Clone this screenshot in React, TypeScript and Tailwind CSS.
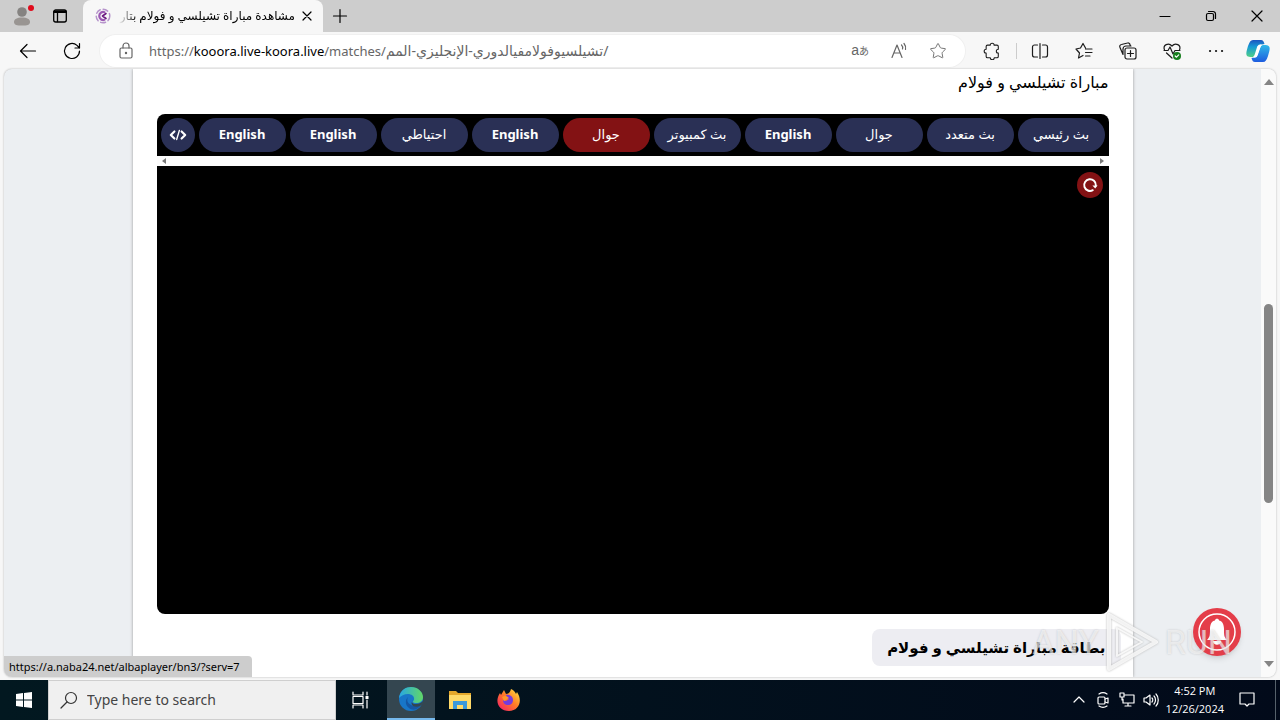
import React from "react";
import { Star } from "lucide-react";

const servers = ["بث رئيسي", "بث متعدد", "جوال", "English", "بث كمبيوتر", "جوال", "English", "احتياطي", "English", "English"];

const S = ({ children, className = "size-5", vb = "0 0 20 20" }: { children: React.ReactNode; className?: string; vb?: string }) => (
  <svg viewBox={vb} className={className} fill="none" stroke="currentColor" strokeWidth="1.2" strokeLinecap="round" strokeLinejoin="round" aria-hidden="true">{children}</svg>
);

function TabStrip() {
  return (
    <header className="flex h-8 shrink-0 items-stretch bg-[#cdcdcd]">
      <div className="flex w-[83px] items-center gap-5 rounded-br-md pl-3">
        <button aria-label="Profile" className="relative">
          <S className="size-5"><circle cx="10" cy="6" r="4.8" fill="#858381" stroke="none" /><path d="M2 16c0-3 3-4.500 8-4.500s8 1.500 8 4.500-3 3.500-8 3.500-8-.5-8-3.500z" fill="#999592" stroke="none" /></S>
          <span className="absolute -top-px left-4 size-[6px] rounded-full bg-[#e00b1c]" />
        </button>
        <button aria-label="Tab actions"><S className="size-4" vb="0 0 16 16"><rect x="1.700" y="2" width="12.600" height="12" rx="2" strokeWidth="1.300" /><path d="M2.500 3.800h11" strokeWidth="2.500" /><path d="M5.500 4v9.500" strokeWidth="1.300" /></S></button>
      </div>
      <div className="flex w-60 items-center rounded-t-lg bg-[#f7f7f7] pl-3">
        <S className="size-4 shrink-0" vb="0 0 16 16"><circle cx="8" cy="8" r="6.800" stroke="#b694cb" strokeWidth="1.500" strokeDasharray="5 3" /><path d="M9.500 4.200a4 4 0 1 0 0 7.600" stroke="#9c5bb5" strokeWidth="2.200" /><path d="M7.500 8l3.500-2.500M7.500 8l3.500 2.500" stroke="#6b1a80" strokeWidth="1.600" /></S>
        <div dir="rtl" className="ml-2 w-[176px] overflow-hidden mask-l-from-90% text-xs whitespace-nowrap">مشاهدة مباراة تشيلسي و فولام بتار</div>
        <button aria-label="Close tab" className="ml-[6px]"><S className="size-3" vb="0 0 12 12"><path d="M2 2l8 8M10 2l-8 8" /></S></button>
      </div>
      <button aria-label="New tab" className="px-[9px]"><S className="size-4" vb="0 0 16 16"><path d="M8 1.500v13M1.500 8h13" /></S></button>
      <div className="ml-auto flex items-center gap-[34px] pr-[17px]">
        <button aria-label="Minimize"><S className="size-3" vb="0 0 12 12"><path d="M1 6.500h10" /></S></button>
        <button aria-label="Restore"><S className="size-3" vb="0 0 12 12"><rect x="1.500" y="3.500" width="7" height="7" rx="1.500" /><path d="M3.500 1.500H8a2.500 2.500 0 0 1 2.500 2.500v4.500" /></S></button>
        <button aria-label="Close"><S className="size-3" vb="0 0 12 12"><path d="M1 1l10 10M11 1L1 11" /></S></button>
      </div>
    </header>
  );
}

function Toolbar() {
  return (
    <nav className="flex h-[37px] shrink-0 items-center bg-[#f7f7f7] pr-[10px] pl-[18px]">
      <button aria-label="Back"><S><path d="M17.500 10H3M9 3.500L2.500 10 9 16.500" /></S></button>
      <button aria-label="Refresh" className="ml-6"><S><path d="M17.500 10A7.500 7.500 0 1 1 15 4.400L17.500 7M17.500 2.500V7H13" /></S></button>
      <div className="ml-[18px] flex h-8 min-w-0 flex-1 items-center rounded-full bg-white pr-[18px] pl-4 text-[#666] ring-1 ring-[#f0f0f0]">
        <button aria-label="Site information"><S><rect x="4" y="7" width="12" height="10" rx="1.500" /><path d="M7 7V5a3 3 0 0 1 6 0v2" /><circle cx="10" cy="12" r=".6" fill="currentColor" /></S></button>
        <div className="ml-[13px] flex-1 truncate text-[13px] leading-6" dir="ltr">https://<span className="text-black">kooora.live-koora.live</span>/matches/<span className="text-sm"><bdi>تشيلسيوفولامفيالدوري-الإنجليزي-المم</bdi>/</span></div>
        <button className="font-['Liberation_Sans','Noto_Sans_CJK_JP',sans-serif] text-[14px]" aria-label="Translate">a<span className="text-[10px]">あ</span></button>
        <button className="ml-5" aria-label="Read aloud"><S><path d="M3 16.500L8 4l5 12.500M5 12h6M12.500 4a4 4 0 0 1 1 4M15 2.500a7 7 0 0 1 1.500 6" /></S></button>
        <button className="ml-5" aria-label="Add to favorites"><Star size={18} strokeWidth={1.2} /></button>
      </div>
      <div className="ml-[18px] flex items-center text-[#1c1c1c]">
        <button aria-label="Extensions"><S className="size-[18px]"><path d="M5 3.500h3a2.200 2.200 0 0 1 4.400 0h3.100a1.500 1.500 0 0 1 1.500 1.500v3a2.200 2.200 0 0 0 0 4.400V16a1.500 1.500 0 0 1-1.500 1.500h-3a2.200 2.200 0 0 1-4.400 0H5A1.500 1.500 0 0 1 3.500 16v-3.600a2.200 2.200 0 0 1 0-4.400V5A1.500 1.500 0 0 1 5 3.500z" /></S></button>
        <span className="mr-[13px] ml-[15px] h-4 w-px bg-[#ccc]" />
        <div className="flex items-center gap-6">
          <button aria-label="Split screen"><S><path d="M7.500 4H4.500A2 2 0 0 0 2.500 6v8a2 2 0 0 0 2 2h3M12.500 4h3a2 2 0 0 1 2 2v8a2 2 0 0 1-2 2h-3M10 2.500v15" /></S></button>
          <button aria-label="Favorites"><S><path d="M11.500 7L9 2.500 6.500 7 2 8l3.500 4-1 5L9 14.500M11.500 8H18M11.500 11.500H18M11.500 15H16" /></S></button>
          <button aria-label="Collections"><S><rect x="7" y="7" width="11" height="11" rx="2" /><path d="M12.500 9.500v6M9.500 12.500h6M5 13.500l-3-7a2 2 0 0 1 1.500-3l6-1.500a2 2 0 0 1 2.500 1.500l.5 1.500M5 13.500V8a3 3 0 0 1 3-3h5" /></S></button>
          <button aria-label="Browser essentials"><S><path d="M2.500 9C.5 4 6.500 1 10 5c3.500-4 9.500-1 7.500 4M4.500 12l5.500 5M2 9.500h4L8 6l3 7 2-3.500h5" /><circle cx="15" cy="15" r="4" fill="#167e1d" stroke="none" /><path d="M13.200 15l1.300 1.200 2.200-2.300" stroke="white" /></S></button>
          <button aria-label="Settings and more"><S><path d="M4 10h.1M10 10h.1M16 10h.1" strokeWidth="2.200" /></S></button>
        </div>
        <button aria-label="Copilot" className="ml-5"><Copilot /></button>
      </div>
    </nav>
  );
}

function Copilot() {
  return (
    <svg viewBox="0 0 24 24" className="size-6" aria-hidden="true">
      <defs><linearGradient id="ca" x2="0" y2="1"><stop stopColor="#1d55c0" /><stop offset=".4" stopColor="#179bd5" /><stop offset="1" stopColor="#50cf87" /></linearGradient><linearGradient id="cb" x2="0" y2="1"><stop stopColor="#2fb9e8" /><stop offset="1" stopColor="#1d5bdf" /></linearGradient></defs>
      <path d="M7 1h8c2 0 2.500 1 3.500 4l-5 1-4 10c-1 2-2 2-4 2-7 0-5.500-4-3.500-11C3.500 3 4.500 1 7 1z" fill="url(#ca)" />
      <path d="M17 23H9c-2 0-2.500-1-3.500-4l5-1 4-10c1-2 2-2 4-2 7 0 5.500 4 3.500 11-1.500 4-2.500 6-5 6z" fill="url(#cb)" />
      <path d="M12 7.500c.5-1 1.500-1.500 3.500-1.500-1 0-1.500 1-2 2.500L11 16c-.5 1.500-1.500 2-3.500 2 1 0 1.500-1 2-2.500z" fill="white" stroke="white" strokeWidth="1.500" />
    </svg>
  );
}

function Page() {
  return (
    <div className="relative mx-1 mb-[3px] flex min-h-0 flex-1 overflow-hidden rounded-lg bg-[#eceff2] shadow-[0_0_2px_#aaa]">
      <main className="min-w-0 flex-1 overflow-hidden">
        <article dir="rtl" className="mx-auto h-full max-w-[1000px] bg-white px-6 shadow-[0_0_3px_#999]">
          <h1 className="h-[45px] text-base leading-[26px]">مباراة تشيلسي و فولام</h1>
          <section className="flex h-[500px] flex-col overflow-hidden rounded-lg bg-black text-white">
            <div className="flex gap-1 p-1">
              {servers.map((s, i) => (
                <a key={i} href={"#server-" + i} className={"flex h-[34px] flex-1 items-center justify-center rounded-full whitespace-nowrap " + (i === 5 ? "bg-[#831214]" : "bg-[#2a3055]") + (s === "English" ? " text-[13px] font-bold" : " text-[13px]")}>{s}</a>
              ))}
              <button aria-label="Embed code" className="flex size-[34px] items-center justify-center rounded-full bg-[#2a3055]"><S className="size-[18px]"><path d="M6 6l-4 4 4 4M14 6l4 4-4 4" strokeWidth="2.400" /><path d="M11.500 5l-3 10" strokeWidth="1.500" /></S></button>
            </div>
            <div dir="ltr" className="flex h-[10px] items-center justify-between bg-[#fcfcfc] px-1 text-[#777]">
              <S className="size-[6px]" vb="0 0 6 6"><path d="M5 0v6L1 3z" fill="currentColor" stroke="none" /></S>
              <S className="size-[6px]" vb="0 0 6 6"><path d="M1 0v6l4-3z" fill="currentColor" stroke="none" /></S>
            </div>
            <div className="p-[6px]"><button aria-label="Reload player" className="flex size-[26px] items-center justify-center rounded-full bg-[#831214]"><S className="size-4"><path d="M13.500 16.500A7.300 7.300 0 1 1 17.300 10.500" strokeWidth="2.400" /><path d="M13 10.500h6.500l-3 4z" fill="white" stroke="none" /></S></button></div>
          </section>
          <h2 className="mt-[15px] -mr-3 w-fit rounded-lg bg-[#ededf2] px-[15px] text-[15px] leading-[37px] font-bold">بطاقة مباراة تشيلسي و فولام</h2>
        </article>
      </main>
      <aside className="flex w-[15px] shrink-0 flex-col items-center bg-[#fafafa] py-2 text-[#858585]">
        <S className="size-[10px]" vb="0 0 10 10"><path d="M5 2l5 6H0z" fill="currentColor" stroke="none" /></S>
        <span className="mt-[217px] h-[199px] w-[9px] rounded-full bg-[#858585]" />
        <S className="mt-auto size-[10px]" vb="0 0 10 10"><path d="M0 2h10L5 8z" fill="currentColor" stroke="none" /></S>
      </aside>
      <button aria-label="Notifications" className="absolute right-[35px] bottom-[21px] size-12 rounded-full bg-[#e43d49] text-white shadow-md">
        <S className="size-12" vb="0 0 48 48"><circle cx="24" cy="24" r="18" strokeWidth="1.500" /><path d="M14 32c3-3 3-5 3-11 0-5 2-8 5-8.500 0-2.500 4-2.500 4 0 3 .5 5 3.500 5 8.500 0 6 0 8 3 11zM20 33h8c0 5-8 5-8 0z" fill="white" stroke="none" /></S>
      </button>
      <div className="pointer-events-none absolute right-11 bottom-1 flex items-center gap-[6px] font-['Roboto',sans-serif] text-[34px] leading-[60px] text-white/60 [text-shadow:0_0_2px_#8886]">
        <span>ANY</span>
        <S className="h-[62px] w-[54px] drop-shadow-[0_0_1px_#aaa]" vb="0 0 54 62"><path d="M4 4v54l47-27z" stroke="white" strokeOpacity=".8" strokeWidth="4" /><path d="M12 17v28l25-14z" stroke="white" strokeOpacity=".8" strokeWidth="2" /></S>
        <span>RUN</span>
      </div>
      <output className="absolute bottom-0 left-0 rounded-tr-sm bg-[#cdcdcd] pr-[12px] pl-[5px] text-[11px] leading-[21px]">https://a.naba24.net/albaplayer/bn3/?serv=7</output>
    </div>
  );
}

function Taskbar() {
  return (
    <footer className="flex h-10 shrink-0 items-stretch bg-linear-to-r from-[#021820] to-[#020a1a] text-white">
      <button aria-label="Start" className="flex w-12 items-center justify-center"><S className="size-4" vb="0 0 16 16"><path d="M0 2l7-1v6.500H0zM8 1l8-1v7.500H8zM0 8.500h7V15l-7-1zM8 8.500h8V16l-8-1z" fill="white" stroke="none" /></S></button>
      <label className="flex w-72 items-center gap-2 border border-[#cfcfcf] bg-[#f0f0f0] px-[10px] text-[#333]">
        <S><circle cx="12" cy="8" r="5.500" /><path d="M8 12l-6 6" /></S>
        <input aria-label="Search" placeholder="Type here to search" className="min-w-0 flex-1 bg-transparent text-sm outline-none placeholder:text-[#444]" />
      </label>
      <button aria-label="Task view" className="mr-1 flex w-[47px] items-center justify-center"><S className="size-[18px]" vb="0 0 18 18"><path d="M2 1v3h10V1M2 17v-3h10v3M2 5.500h10v7H2zM16 1v3M16 9v8" /><path d="M14.500 5h3v3h-3z" fill="white" stroke="none" /></S></button>
      <button aria-label="Edge" className="flex w-12 items-center justify-center border-b-2 border-[#76b9ed] bg-[#344650]">
        <svg viewBox="0 0 24 24" className="size-6">
          <defs><linearGradient id="ea"><stop stopColor="#27a6e4" /><stop offset="1" stopColor="#62d866" /></linearGradient></defs>
          <circle cx="12" cy="12" r="12" fill="#1876c8" />
          <path d="M0 11C1 3 7 0 12 0c7 0 12 5 12 10 0 4-3 6-7 6-3 0-4-1-2-3 1-4-3-6-6-6-4 0-7 2-9 4z" fill="url(#ea)" />
          <path d="M9 10c-3 6 4 11 13 8-3 5-9 6-12 3-4-3-4-8-1-11z" fill="#1557a4" />
          <path d="M14 13c-2 2-1 4 3 4 3 0 5-1 7-3 0 3-1 4-3 5-6 2-11-1-7-6z" fill="#344650" />
        </svg>
      </button>
      <button aria-label="File Explorer" className="flex w-[50px] items-center justify-center"><svg viewBox="0 0 22 20" className="h-5 w-[22px]"><path d="M0 1h7l2 2h13v16H0z" fill="#e5a82b" /><path d="M0 5h22v14H0z" fill="#ffda69" /><path d="M4 11h14v8h-4v-4H8v4H4z" fill="#3b99db" /></svg></button>
      <button aria-label="Firefox" className="flex w-12 items-center justify-center"><svg viewBox="0 0 24 24" className="size-6"><defs><linearGradient id="fa" x1="1" x2="0" y2="1"><stop stopColor="#ffea43" /><stop offset=".45" stopColor="#ff7e26" /><stop offset="1" stopColor="#f5156c" /></linearGradient></defs><path d="M3 5l1 2 3-5 2 4c2 0 4-1 5-5 3 1 4 3 5 5l1-2c6 9 2 19-8 19S-3 14 3 5z" fill="url(#fa)" /><path d="M9 7c3-1 7 1 7 5 0 3-2 5-5 5s-5-2-5-5l3 1 3-2-2-1z" fill="#753bdc" /><path d="M5 9c3-2 5-1 7 1-2 0-3 3-5 3z" fill="#ff9828" /></svg></button>
      <div className="ml-auto flex items-center">
        <button aria-label="Hidden icons"><S className="size-4" vb="0 0 16 16"><path d="M3 10l5-5 5 5" /></S></button>
        <S className="ml-2 size-4" vb="0 0 16 16"><rect x="3" y="5" width="7" height="7" rx="1" /><path d="M10 7l3-1v5l-3-1M4 2c3-2 5-2 8 0M4 14c3 2 5 2 8 0" /></S>
        <S className="ml-2 size-4" vb="0 0 16 16"><path d="M6 3h9v8H4V7M9 11v3M6 14h6M1 1h4v4H1zM3 5v3" /></S>
        <S className="ml-2 size-4" vb="0 0 16 16"><path d="M1 6v4h2l4 3V3L3 6zM9 6c1 1 1 3 0 4M11 4c2 2 2 6 0 8M13 2c3 3 3 9 0 12" /></S>
        <div className="ml-[7px] text-center font-['Open_Sans',sans-serif] text-[11px] leading-[18px]"><div>4:52 PM</div><div>12/26/2024</div></div>
        <button aria-label="Notification center" className="ml-[15px]"><S className="size-4" vb="0 0 16 16"><path d="M1 1h14v11H10l-2 2-2-2H1z" /></S></button>
        <span className="ml-5 h-10 w-px bg-[#56616b]" /><span className="w-1" />
      </div>
    </footer>
  );
}

export default function App() {
  return (
    <div className="flex h-screen flex-col overflow-hidden bg-[#f7f7f7] font-['Noto_Sans','DejaVu_Sans',sans-serif] text-black">
      <TabStrip />
      <Toolbar />
      <Page />
      <Taskbar />
    </div>
  );
}
